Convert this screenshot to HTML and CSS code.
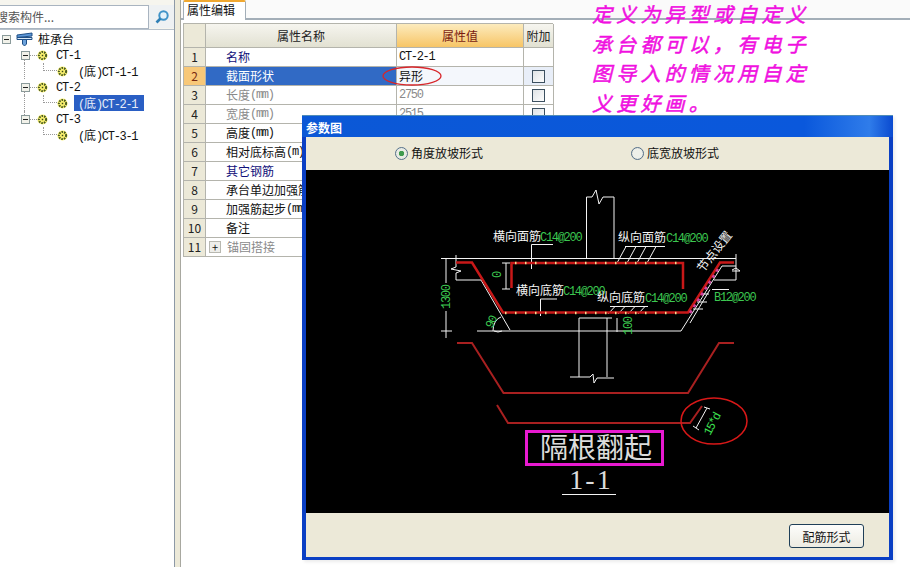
FILE: index.html
```html
<!DOCTYPE html>
<html lang="zh-CN">
<head>
<meta charset="utf-8">
<title>属性编辑</title>
<link rel="stylesheet" href="styles.css">
</head>
<body>
<svg class="defs" width="0" height="0" aria-hidden="true">
  <symbol id="gear" viewBox="0 0 12 12">
    <circle cx="6" cy="6" r="5.5" fill="#f8f070"/>
    <circle cx="6" cy="6" r="3.9" fill="none" stroke="#4a5a20" stroke-width="2.2" stroke-dasharray="1.7 1.1"/>
    <circle cx="6" cy="6" r="1.6" fill="#e8e060"/>
    <circle cx="6" cy="6" r="0.8" fill="#3a4a20"/>
  </symbol>
  <symbol id="minus" viewBox="0 0 9 9">
    <rect x=".5" y=".5" width="8" height="8" fill="#f2f2ea" stroke="#8a9a9a"/>
    <path d="M2 4.5h5" stroke="#222"/>
  </symbol>
</svg>
<div class="app">
  <aside class="left">
    <div class="search">
      <div class="search-input">搜索构件...</div>
      <div class="search-btn">
        <svg width="16" height="16" viewBox="0 0 16 16"><circle cx="9.5" cy="6.5" r="4.2" fill="#e4f2fa" stroke="#3f93c8" stroke-width="2"/><path d="M6.5 9.5L2.5 13.5" stroke="#2f7fb5" stroke-width="2.6"/></svg>
      </div>
    </div>
    <div class="tree">
      <div class="row root">
        <svg class="ex" width="9" height="9"><use href="#minus"/></svg>
        <svg class="pile" width="17" height="15" viewBox="0 0 17 15"><path d="M1 3l15-2v3L1 5.500z" fill="#5c97d8" stroke="#1f4f86"/><path d="M1 5.500h15v2H1z" fill="#dbe9f6" stroke="#1f4f86"/><path d="M6.500 7.500h4V12l-2 2-2-2z" fill="#6da3dc" stroke="#1f4f86"/></svg>
        <span class="label big">桩承台</span>
      </div>
      <div class="row lvl1 line-down">
        <svg class="ex" width="9" height="9"><use href="#minus"/></svg><i class="dash"></i>
        <svg class="gear" width="11" height="11"><use href="#gear"/></svg>
        <span class="label"><span class="lat">CT-1</span></span>
      </div>
      <div class="row lvl2 line-through">
        <i class="elbow"></i>
        <svg class="gear" width="11" height="11"><use href="#gear"/></svg>
        <span class="label"><span class="lat">(</span>底<span class="lat">)CT-1-1</span></span>
      </div>
      <div class="row lvl1 line-down">
        <svg class="ex" width="9" height="9"><use href="#minus"/></svg><i class="dash"></i>
        <svg class="gear" width="11" height="11"><use href="#gear"/></svg>
        <span class="label"><span class="lat">CT-2</span></span>
      </div>
      <div class="row lvl2 line-through">
        <i class="elbow"></i>
        <svg class="gear" width="11" height="11"><use href="#gear"/></svg>
        <span class="label selected"><span class="lat">(</span>底<span class="lat">)CT-2-1</span></span>
      </div>
      <div class="row lvl1 line-up">
        <svg class="ex" width="9" height="9"><use href="#minus"/></svg><i class="dash"></i>
        <svg class="gear" width="11" height="11"><use href="#gear"/></svg>
        <span class="label"><span class="lat">CT-3</span></span>
      </div>
      <div class="row lvl2">
        <i class="elbow"></i>
        <svg class="gear" width="11" height="11"><use href="#gear"/></svg>
        <span class="label"><span class="lat">(</span>底<span class="lat">)CT-3-1</span></span>
      </div>
    </div>
  </aside>
  <div class="splitter"></div>
  <main class="right">
    <div class="tabs"><div class="tab">属性编辑</div></div>
    <div class="grid">
      <div class="cell idx head"></div><div class="cell head center">属性名称</div><div class="cell head center val-head">属性值</div><div class="cell head center">附加</div>

      <div class="cell idx">1</div><div class="cell name navy">名称</div><div class="cell val"><span class="lat">CT-2-1</span></div><div class="cell"></div>

      <div class="cell idx idx-on">2</div><div class="cell name on">截面形状</div><div class="cell val val-on">异形</div><div class="cell chk-on"><i class="check"></i></div>

      <div class="cell idx">3</div><div class="cell name grey">长度<span class="lat">(mm)</span></div><div class="cell val grey"><span class="lat">2750</span></div><div class="cell"><i class="check"></i></div>

      <div class="cell idx">4</div><div class="cell name grey">宽度<span class="lat">(mm)</span></div><div class="cell val grey"><span class="lat">2515</span></div><div class="cell"><i class="check"></i></div>

      <div class="cell idx">5</div><div class="cell name">高度<span class="lat">(mm)</span></div><div class="cell val"></div><div class="cell"></div>

      <div class="cell idx">6</div><div class="cell name">相对底标高<span class="lat">(m)</span></div><div class="cell val"></div><div class="cell"></div>

      <div class="cell idx">7</div><div class="cell name navy">其它钢筋</div><div class="cell val"></div><div class="cell"></div>

      <div class="cell idx">8</div><div class="cell name">承台单边加强筋</div><div class="cell val"></div><div class="cell"></div>

      <div class="cell idx">9</div><div class="cell name">加强筋起步<span class="lat">(mm)</span></div><div class="cell val"></div><div class="cell"></div>

      <div class="cell idx">10</div><div class="cell name">备注</div><div class="cell val"></div><div class="cell"></div>

      <div class="cell idx">11</div><div class="cell name grey expand"><i class="plus">+</i>锚固搭接</div><div class="cell val"></div><div class="cell"></div>
    </div>
  </main>
</div>

<svg class="ring" width="62" height="22" viewBox="0 0 62 22"><ellipse cx="31" cy="11" rx="29" ry="9" fill="none" stroke="#d8262a" stroke-width="1.300"/></svg>

<div class="note">定义为异型或自定义<br>承台都可以，有电子<br>图导入的情况用自定<br>义更好画。</div>

<section class="dialog">
  <div class="titlebar">参数图</div>
  <div class="client">
    <div class="radios">
      <label class="radio"><i class="dot on-dot"></i>角度放坡形式</label>
      <label class="radio"><i class="dot"></i>底宽放坡形式</label>
    </div>
    <svg class="cad" width="583" height="343" viewBox="306 170 583 343">
      <g class="w">
        <path d="M586.500 197V258.500M614 197V258.500M586.500 197H592M603 197H614M592 197l4-7 3 14 4-7"/>
        <path d="M443 258.500H736"/>
        <path d="M456 255V267l-5 2 10 2-5 2V280H481L510 330M477 331H681L722 266H736M714 280H736M736 254V280M732 270l4-2 4 3h-8"/>
        <path d="M446 258V283M446 311V338M441 258.500H452M441 331H452"/>
        <path d="M506 263V289M502 263H510M502 289H510"/>
        <path d="M502 331a9 9 0 0 1 -8 0M493 331a10 14 0 0 1 8-14"/>
        <path d="M531.500 269V244.500H553M540.500 316V299H557"/>
        <path d="M625 246.500H665M626 246.500L617 263M636 246.500L627 263M646 246.500L637 263M656 246.500L647 263"/>
        <path d="M610 306.500H648M615 306.500L608 314M625 306.500L618 314M635 306.500L628 314M645 306.500L638 314"/>
        <path d="M712 289.500H729M700 294H709M697 302H707M693 309H703M710 289.500L690 323"/>
        <path d="M579 318V377M607 318V377M579 318H612M617 318V332"/>
        <path d="M570 377H590l3-3 1 9 3-5H614"/>
        <path d="M562 494.500H616"/>
      </g>
      <g class="r">
        <path d="M456 262.500H472L503 312.500H688L720 262.500H734"/>
        <path d="M511.500 288V263H683V289"/>
      </g>
      <path class="dots" d="M515 263H680"/>
      <path class="dots" d="M505 313H680"/>
      <path class="pink" d="M690 313L720 266"/>
      <g class="r2">
        <path d="M457 343H472L503.500 393H688L719 343H734"/>
        <path d="M497 405L508 423H690L702 406"/>
      </g>
      <ellipse class="circ" cx="714" cy="421" rx="33" ry="23"/>
      <g class="w">
        <path d="M696 428L707 408M693 426l6 4M704 407l6 2"/>
      </g>
      <rect class="mag" x="526.500" y="431.500" width="136" height="33"/>
      <text class="t-w" x="493" y="241">横向面筋</text><text class="t-g" x="540" y="241">C14@200</text>
      <text class="t-w" x="516" y="295">横向底筋</text><text class="t-g" x="563" y="295">C14@200</text>
      <text class="t-w" x="618" y="242">纵向面筋</text><text class="t-g" x="666" y="242">C14@200</text>
      <text class="t-w" x="597" y="302">纵向底筋</text><text class="t-g" x="645" y="302">C14@200</text>
      <text class="t-g" x="714" y="301">B12@200</text>
      <text class="t-w" transform="translate(703 273) rotate(-52)">节点设置</text>
      <text class="t-g" transform="translate(450 309) rotate(-90)">1300</text>
      <text class="t-g" transform="translate(501 278) rotate(-90)">0</text>
      <text class="t-g" transform="translate(492 329) rotate(-65)">90</text>
      <text class="t-g" transform="translate(632 335) rotate(-90)">100</text>
      <text class="t-gs" transform="translate(710 436) rotate(-62)">15*d</text>
      <text class="t-big" x="596" y="458" text-anchor="middle">隔根翻起</text>
      <text class="t-sec" x="591" y="489" text-anchor="middle">1-1</text>
    </svg>
    <div class="foot"><button class="btn" type="button">配筋形式</button></div>
  </div>
</section>
</body>
</html>
```
FILE: styles.css
```css
* { box-sizing: border-box; }
html, body { margin: 0; padding: 0; }
body {
  width: 910px; height: 567px; overflow: hidden; position: relative;
  background: #fff; color: #111;
  font: 12px/16px "Noto Sans CJK SC", "Liberation Sans", sans-serif;
}
.defs { position: absolute; }
.lat { font-family: "Liberation Mono", monospace; font-size: 12px; letter-spacing: -1.300px; }

.app { display: flex; height: 567px; }

/* left tree */
.left { width: 175px; flex: none; display: flex; flex-direction: column; background: #fff; border-right: 1px solid #8d99a6; }
.search { display: flex; height: 30px; padding: 5px 0 1px; background: #f6f5ee; border-bottom: 1px solid #b8c2cc; }
.search-input { flex: 1; height: 24px; background: #fff; border: 1px solid #a9b4c0; border-left: 0; color: #555; padding-top: 3px; margin-left: -4px; font-size: 12px; }
.search-btn { width: 25px; display: flex; align-items: center; justify-content: center; background: #eef1f3; }
.tree { padding-top: 1px; }
.row { height: 16px; display: flex; align-items: center; position: relative; }
.root { padding-left: 2px; }
.pile { margin-left: 5px; }
.label { margin-left: 5px; white-space: nowrap; }
.lvl1 { padding-left: 21px; }
.lvl1 .label { margin-left: 8px; }
.dash { width: 7px; border-top: 1px dotted #999; }
.lvl2 { padding-left: 43px; }
.lvl2 .label { margin-left: 10px; height: 16px; }
.elbow { width: 14px; height: 8px; margin-top: -8px; border-left: 1px dotted #999; border-bottom: 1px dotted #999; }
.lvl2 .selected { background: #2a5fc4; color: #e8edf8; margin-left: 6px; padding: 0 7px 0 4px; }
.lvl1::before, .lvl2::before { content: ""; position: absolute; left: 24px; border-left: 1px dotted #999; }
.line-down::before { top: 12px; bottom: 0; }
.line-through::before { top: 0; bottom: 0; }
.line-up::before { top: 0; height: 4px; }

.splitter { width: 6px; flex: none; background: #ece9d8; border-right: 1px solid #a8a8a0; }

/* right */
.right { flex: 1; min-width: 0; background: #fff; }
.tabs { height: 20px; background: #fafafa; border-bottom: 2px solid #a3aeb8; padding-left: 2px; }
.tab { width: 63px; height: 20px; background: #fff; border: 1px solid #a3aeb8; border-top: 2px solid #f0a830; border-bottom: 0; border-radius: 2px 2px 0 0; padding-left: 3px; line-height: 15px; }

.grid { margin: 3px 0 0 2px; width: 370px; display: grid; grid-template-columns: 22px 191px 127px 30px; grid-template-rows: 24px repeat(11, 19px); border-top: 1px solid #b4b4ac; border-left: 1px solid #b4b4ac; }
.cell { border-right: 1px solid #b4b4ac; border-bottom: 1px solid #b4b4ac; line-height: 18px; white-space: nowrap; overflow: hidden; display: flex; align-items: center; }
.head { background: linear-gradient(#f6f5ef, #e2e1d2); color: #222; }
.center { justify-content: center; }
.val-head { background: linear-gradient(#fcebbd, #f7c566); color: #7a1a10; }
.idx { background: #ece9d8; justify-content: center; color: #222; }
.idx-on { background: #f8c878; color: #7a2a10; }
.name { padding-left: 20px; }
.navy { color: #10107a; }
.grey { color: #8a8a8a; }
.on { background: #316ac5; color: #fff; }
.val { padding-left: 2px; }
.val-on { background: #f4f7fc; }
.chk-on { background: #e8eef8; }
.check { display: block; width: 13px; height: 13px; margin-left: 8px; border: 1px solid #3c5060; background: linear-gradient(135deg, #dfe3e6, #fdfdfd); }
.expand { padding-left: 3px; }
.plus { display: flex; align-items: center; justify-content: center; width: 12px; height: 12px; margin-right: 6px; background: #eeeeea; border: 1px solid #b8b8b0; font-style: normal; color: #111; font-size: 11px; line-height: 10px; }

/* overlays */
.ring { position: absolute; left: 381px; top: 65px; }
.note { position: absolute; left: 592px; top: -1px; width: 240px; color: #f010e0; font-size: 20px; line-height: 29.600px; letter-spacing: 4.200px; font-style: italic; white-space: nowrap; -webkit-text-stroke: .5px #f010e0; }

.dialog { position: absolute; left: 302px; top: 115px; width: 591px; height: 445px; display: flex; flex-direction: column; background: #0a3fc4; box-shadow: 2px 2px 3px rgba(0, 0, 0, .08); }
.titlebar { height: 22px; flex: none; padding: 3px 0 0 4px; color: #fff; font-weight: 700; font-size: 12px; line-height: 17px; background: linear-gradient(90deg, #0b58d6 0%, #0a58dc 85%, #2f7cea 96%, #0a4ad0 100%); border-top: 1px solid #4f8cb8; }
.client { flex: 1; margin: 0 4px 3px; display: flex; flex-direction: column; background: #ece9d8; }
.radios { height: 33px; flex: none; display: flex; padding: 8px 0 0 89px; gap: 148px; }
.radio { display: flex; align-items: center; height: 16px; gap: 3px; color: #111; }
.dot { display: block; width: 13px; height: 13px; border-radius: 50%; border: 1px solid #55708a; background: radial-gradient(circle, #eef0ea 55%, #c8ccc6); }
.on-dot { background: radial-gradient(circle, #3f9a4e 0 2.500px, #e8ebe4 3px); }
.cad { display: block; flex: none; background: #000; }
.foot { flex: 1; display: flex; justify-content: flex-end; align-items: flex-start; padding: 11px 25px 0 0; }
.btn { width: 75px; height: 24px; padding: 0; background: linear-gradient(#fdfdfb, #ecebe2); border: 1px solid #1f3f58; border-radius: 3px; font: 12px "Noto Sans CJK SC", sans-serif; color: #111; }

/* CAD drawing */
.cad path, .cad ellipse, .cad rect { fill: none; }
.w path { stroke: #f4f4f4; stroke-width: 1; }
.r path { stroke: #c81818; stroke-width: 2.500; }
.r2 path { stroke: #a82020; stroke-width: 2; }
.dots { stroke: #f0d890; stroke-width: 2.500; stroke-dasharray: 1.500 8.500; }
.pink { stroke: #d040a0; stroke-width: 2.500; stroke-dasharray: 3 4; }
.circ { stroke: #d81818; stroke-width: 1.500; }
.mag { stroke: #e81ad0; stroke-width: 3; }
.t-w { fill: #f4f4f4; font-size: 12px; }
.t-g { fill: #3cc850; font: 12px "Liberation Mono", monospace; letter-spacing: -1.300px; }
.t-gs { fill: #3ce050; font: 12px "Liberation Mono", monospace; letter-spacing: -1.500px; }
.t-big { fill: #dcdcdc; font-size: 28px; }
.t-sec { fill: #dcdcdc; font: 28px "Liberation Serif", serif; letter-spacing: 2px; }
```
